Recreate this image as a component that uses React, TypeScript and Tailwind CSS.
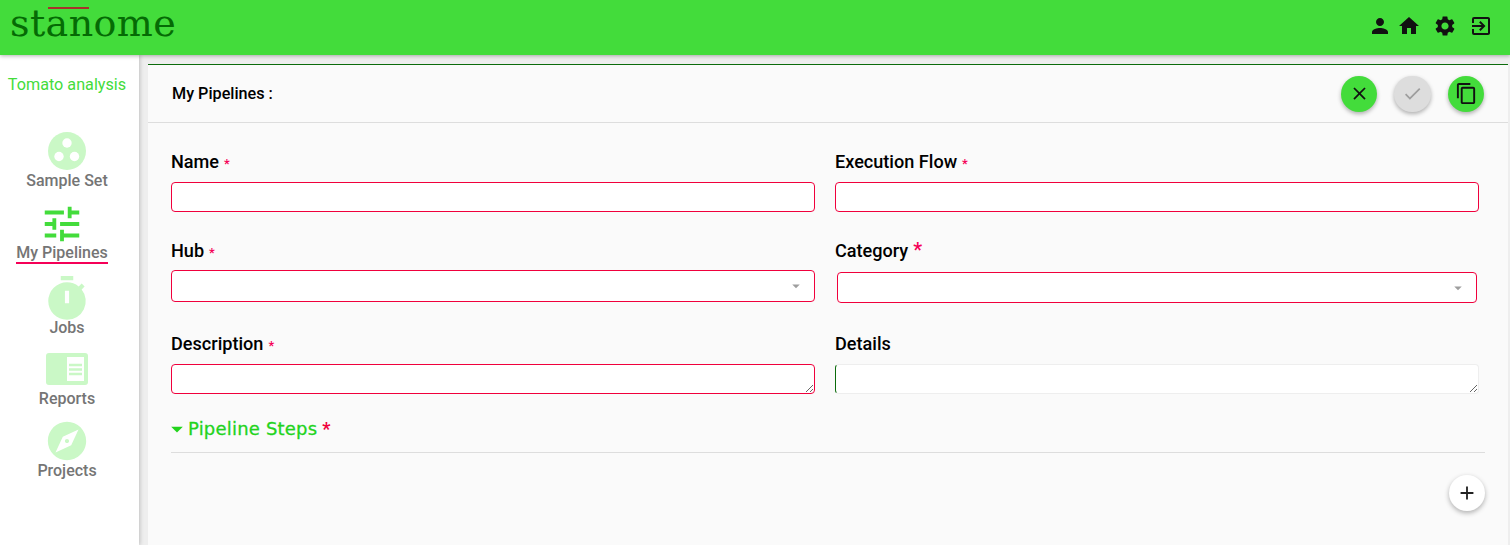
import { MdPerson, MdHome, MdSettings, MdOutlineExitToApp, MdClose, MdCheck, MdContentCopy, MdAdd, MdTune, MdTimer, MdExplore, MdArrowDropDown } from "react-icons/md";
import type { ReactNode } from "react";

function SampleIcon() {
  return (
    <svg width="38" height="38" viewBox="0 0 38 38">
      <circle cx="19" cy="19" r="19" fill="#caf8c6" />
      <circle cx="19" cy="11" r="4.7" fill="#fff" />
      <circle cx="11" cy="24.5" r="4.7" fill="#fff" />
      <circle cx="26.5" cy="24.5" r="4.7" fill="#fff" />
    </svg>
  );
}

function ReportIcon() {
  return (
    <svg width="42" height="32" viewBox="0 0 42 32">
      <rect width="42" height="32" rx="3" fill="#caf8c6" />
      <rect x="21" y="4" width="17" height="24" fill="#fff" />
      <path d="M23 12h13M23 16.5h13M23 21h13" stroke="#caf8c6" strokeWidth="2.4" />
    </svg>
  );
}

function NavItem({ icon, label, active, className }: { icon: ReactNode; label: string; active?: boolean; className: string }) {
  return (
    <div className={`flex flex-col items-center ${className}`}>
      <div className="flex h-[38px] items-center justify-center">{icon}</div>
      <span className={`text-[16px] font-medium text-[#757575] ${active ? "border-b-2 border-[#f50057] leading-[19px]" : "leading-[20px]"}`}>{label}</span>
    </div>
  );
}

function Label({ text, star = true, big }: { text: string; star?: boolean; big?: boolean }) {
  return (
    <div className="h-[22px] text-[18.1px] leading-[22px] font-medium text-black">
      {text}
      {star && <span className={`ml-[5px] leading-none text-[#f50057] ${big ? "text-[20px]" : "text-[13px]"}`}>*</span>}
    </div>
  );
}

const boxCls = "block w-full rounded-[4px] border border-[#f0003c] bg-white outline-none";

function Select({ className }: { className: string }) {
  return (
    <div className={`relative ${boxCls} ${className}`}>
      <MdArrowDropDown className="absolute right-[9px] top-[6px] text-[#9e9e9e]" size={18} />
    </div>
  );
}

export default function App() {
  return (
    <div className="flex h-[545px] w-[1510px] flex-col overflow-hidden bg-[#eeeeee] font-['Roboto',sans-serif]">
      <header className="relative z-20 flex h-[55px] shrink-0 items-start justify-between bg-[#43dc3b] shadow-[0_1px_4px_rgba(0,0,0,0.3)]">
        <div className="relative ml-[10px] mt-[1px] font-['DejaVu_Serif',serif] text-[38px] leading-[44px] tracking-[0.4px] text-[#056b05]">
          stanome
          <span className="absolute left-[38px] top-[6px] h-[2px] w-[41px] bg-[#a8322a]" />
        </div>
        <div className="mr-[17px] mt-[14px] flex items-center text-[#111]">
          <MdPerson size={24} />
          <MdHome size={24} className="ml-[5px]" />
          <MdSettings size={24} className="ml-[12px]" />
          <MdOutlineExitToApp size={24} className="ml-[12px]" />
        </div>
      </header>

      <div className="flex min-h-0 flex-1">
        <aside className="z-10 flex w-[139px] shrink-0 flex-col items-center bg-white pr-[5px] shadow-[1px_0_4px_rgba(0,0,0,0.2)]">
          <div className="mt-[20px] text-[16.2px] leading-[20px] text-[#43dc3b]">Tomato analysis</div>
          <NavItem className="mt-[37px] h-[73px] gap-[1px]" icon={<SampleIcon />} label="Sample Set" />
          <NavItem className="-ml-[10px] h-[72px]" icon={<MdTune size={46} className="text-[#43dc3b]" />} active label="My Pipelines" />
          <NavItem className="mt-[3px] h-[70px]" icon={<MdTimer size={50} className="text-[#caf8c6]" />} label="Jobs" />
          <NavItem className="h-[69px] gap-[1px]" icon={<ReportIcon />} label="Reports" />
          <NavItem className="mt-[3px] gap-[1px]" icon={<MdExplore size={46} className="text-[#caf8c6]" />} label="Projects" />
        </aside>

        <main className="ml-[9px] mr-[2px] mt-[9px] flex min-w-0 flex-1 flex-col border-t border-[#0b6b0b] bg-[#fafafa]">
          <div className="flex h-[58px] shrink-0 items-center justify-between border-b border-[#dddddd] pl-[24px] pr-[24px]">
            <div className="pt-[2px] text-[16.2px] font-medium text-black">My Pipelines :</div>
            <div className="flex items-center gap-[17px]">
              <button className="flex h-[36px] w-[36px] items-center justify-center rounded-full bg-[#43dc3b] text-[#111] shadow-[0_2px_4px_rgba(0,0,0,0.3)]"><MdClose size={21} /></button>
              <button className="flex h-[36px] w-[37px] items-center justify-center rounded-full bg-[#dddddd] text-[#9e9e9e] shadow-[0_2px_4px_rgba(0,0,0,0.3)]"><MdCheck size={21} /></button>
              <button className="flex h-[36px] w-[36px] items-center justify-center rounded-full bg-[#43dc3b] text-[#111] shadow-[0_2px_4px_rgba(0,0,0,0.3)]"><MdContentCopy size={23} /></button>
            </div>
          </div>

          <div className="flex flex-col pl-[23px] pr-[23px]">
            <div className="mt-[28px] flex gap-[20px] pr-[6px]">
              <div className="w-[644px]">
                <Label text="Name" />
                <input className={`${boxCls} mt-[9px] h-[30px]`} />
              </div>
              <div className="w-[644px]">
                <Label text="Execution Flow" />
                <input className={`${boxCls} mt-[9px] h-[30px]`} />
              </div>
            </div>

            <div className="mt-[28px] flex pr-[6px]">
              <div className="w-[644px]">
                <Label text="Hub" />
                <Select className="mt-[8px] h-[32px]" />
              </div>
              <div className="ml-[20px] w-[644px]">
                <Label text="Category" big />
                <div className="px-[2px]">
                  <Select className="mt-[10px] h-[31px]" />
                </div>
              </div>
            </div>

            <div className="mt-[30px] flex gap-[20px] pr-[6px]">
              <div className="w-[644px]">
                <Label text="Description" />
                <textarea className={`${boxCls} mt-[9px] h-[30px]`} />
              </div>
              <div className="w-[644px]">
                <Label text="Details" star={false} />
                <textarea className="mt-[9px] block h-[30px] w-full rounded-[4px] border border-[#eeeeee] border-l-[#0b6b0b] bg-white outline-none" />
              </div>
            </div>

            <div className="mt-[24px] flex h-[35px] items-start border-b border-[#dddddd]">
              <MdArrowDropDown size={28} className="-ml-[8px] -mr-[3px] -mt-[3px] text-[#22d31c]" />
              <span className="font-['DejaVu_Sans',sans-serif] text-[18px] leading-[22px] tracking-[0.2px] text-[#22d31c] [-webkit-text-stroke:0.3px_#22d31c]">Pipeline Steps</span>
              <span className="ml-[5px] text-[18px] leading-[22px] font-bold text-[#f0003c]">*</span>
            </div>

            <div className="mt-[22px] flex justify-end">
              <button className="flex h-[36px] w-[36px] items-center justify-center rounded-full bg-white text-[#222] shadow-[0_2px_5px_rgba(0,0,0,0.3)]"><MdAdd size={22} /></button>
            </div>
          </div>
        </main>
      </div>
    </div>
  );
}
